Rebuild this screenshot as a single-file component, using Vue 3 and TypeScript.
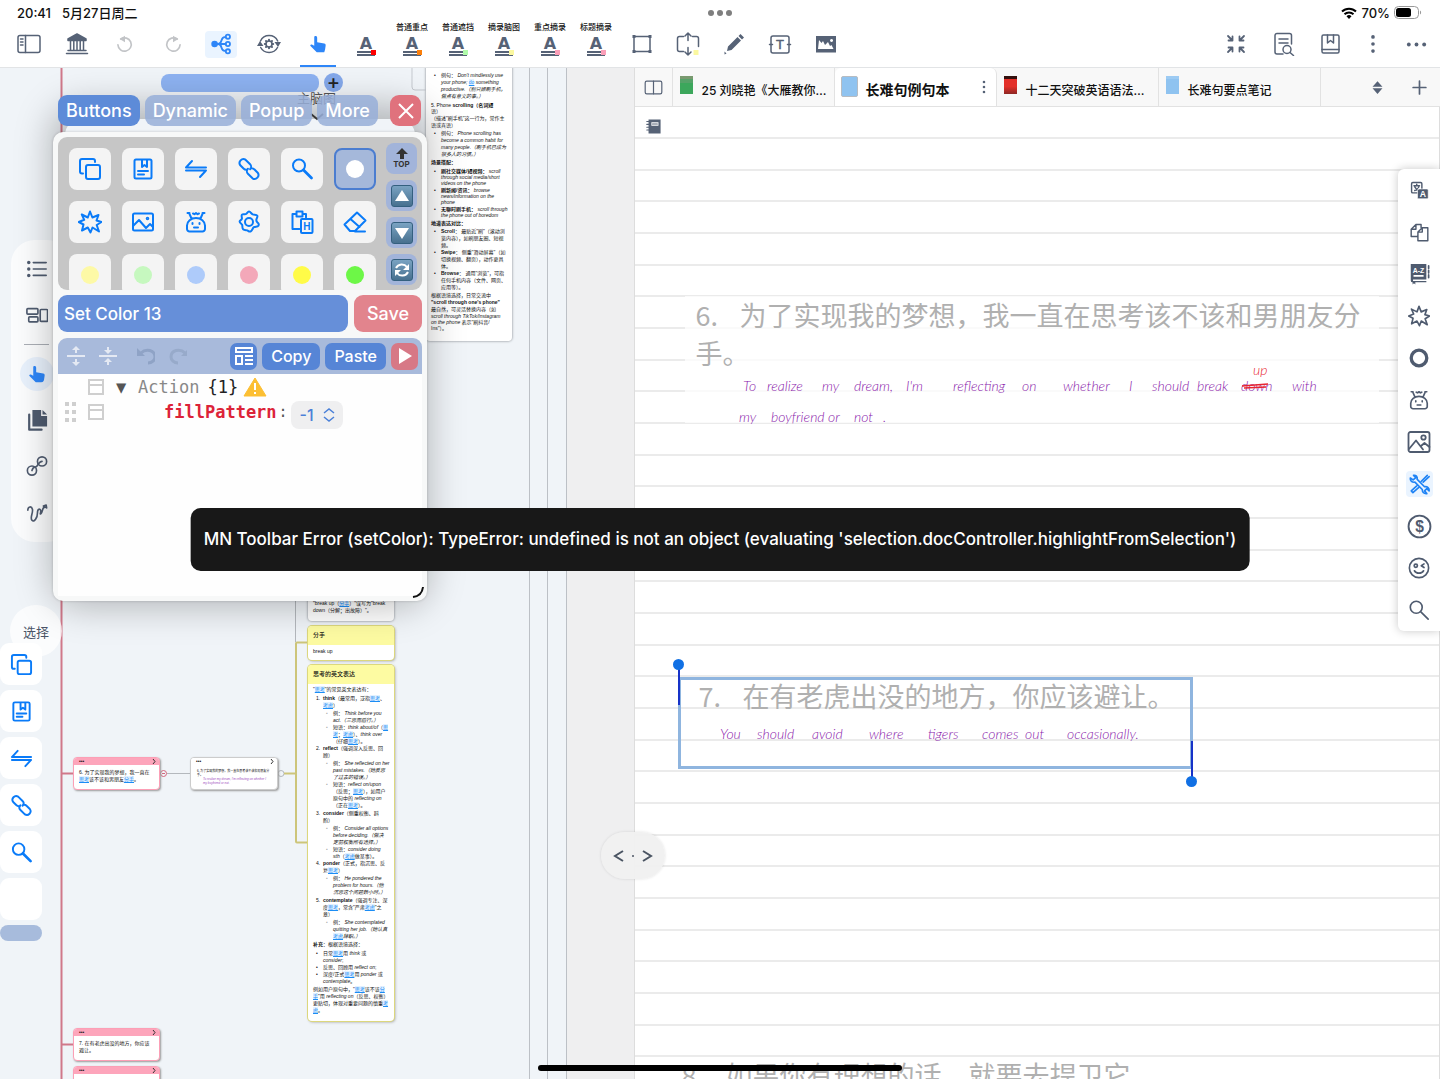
<script setup lang="ts">
import { ref } from 'vue'

interface Run { text: string; kind: string }
interface Block { indent: number; mark?: string; lh: number; gap?: number; text: string }
interface Word { x: number; y: number; text: string; red?: boolean }

const copySq = '<rect x="8" y="8" width="14" height="14" rx="2"/><path d="M5 16.500H4a2 2 0 0 1-2-2V4a2 2 0 0 1 2-2h11a2 2 0 0 1 2 2v1"/>'
const bookNote = '<rect x="3.500" y="2.500" width="17" height="19" rx="1.500"/><path d="M11 3v7l2.500-2 2.500 2V3M7 14h10M7 17.500h6"/>'
const swap = '<path d="M2 10.500h20M2 10.500L8 4M22 13.500H2M22 13.500L16 20"/>'
const chain = '<path d="M10.500 12.500c-1.500.5-3 0-4-1L3.300 8.300a3.900 3.900 0 0 1 5.200-5.600l4.600 4.600c1.400 1.400 1.300 3.600 0 5M13.500 11.500c1.500-.5 3 0 4 1l3.200 3.200a3.900 3.900 0 0 1-5.200 5.600l-4.600-4.600c-1.400-1.400-1.300-3.600 0-5"/>'
const glass = '<circle cx="9" cy="8.500" r="6"/><path d="M13.500 13l8 8" stroke-width="2.800"/>'
const burst = '<path d="M12 1.500l2.400 6L20.500 5l-2 5.500 5 1.500-4.800 3L21 21.500l-6.500-4L12.500 22.500l-2.700-5L4 20.500l1.500-6L.8 12l5.400-2.200L3.800 4.500 9.800 7.500z"/>'
const picture = '<rect x="1.500" y="2" width="21" height="20" rx="2"/><circle cx="16.500" cy="7.500" r="2.200"/><path d="M2 19l7-8.500 7 9M14 16l3.500-3 5 4"/>'
const robot = '<path d="M3 15.500a9 7.500 0 0 1 18 0V19a2.500 2.500 0 0 1-2.500 2.500h-13A2.500 2.500 0 0 1 3 19zM7.500 8.500L5.500 4M16.500 8.500l2-4.500M9 3.500l1.500.7L12 3l1.500 1.200 1.500-.7M10 17.500h4M8.500 13v1M15.500 13v1M3.500 3h2M18.500 3h2"/>'
const hand = '<path fill="currentColor" stroke="none" d="M9 2.500c1.200 0 2 .8 2 2V10l8.500 1.500c1.200.2 1.800 1 1.700 2.200l-.7 5-1 3.300H10.500L3 14.500c-.8-1 .3-2.300 1.600-1.800L7.500 14V4c0-1 .6-1.500 1.500-1.500z"/>'
const links = '<circle cx="6.500" cy="17" r="5"/><circle cx="17.500" cy="7" r="5"/><path d="M6.500 17c2-6.500 3.500-2 5.500-5s3-5 5.500-5"/>'

const icons: Record<string, string> = {
  sidebar: '<rect x="1" y="3.500" width="22" height="17" rx="2"/><path d="M8.500 3.500v17M3.500 7h2.500M3.500 10h2.500M3.500 13h2.500"/>',
  bank: '<path fill="currentColor" d="M12 2l9 5v1.500H3V7z"/><path d="M5.500 9v9M8.800 9v9M12 9v9M15.200 9v9M18.500 9v9M3 18.500h18M1.500 21.500h21"/>',
  undo: '<path d="M7 6a8 8 0 1 1-3.500 7"/><path fill="currentColor" d="M12 2v8L5.500 6z" stroke="none"/>',
  redo: '<path d="M17 6a8 8 0 1 0 3.500 7"/><path fill="currentColor" d="M12 2v8l6.500-4z" stroke="none"/>',
  map: '<circle cx="5" cy="12" r="3.600" fill="currentColor" stroke="none"/><path d="M5 12h12M17 4.500h-1c-5 0-2 7.500-7 7.500 5 0 2 7.500 7 7.500h1"/><circle cx="19.500" cy="4" r="2.300"/><circle cx="19.500" cy="12" r="2.300"/><circle cx="19.500" cy="20" r="2.300"/>',
  cycle: '<path d="M3.500 9A9.500 9.500 0 0 1 20.700 9M20.500 15.500A9.500 9.500 0 0 1 3.700 15.500"/><path fill="currentColor" stroke="none" d="M0 14l3-5 3.500 5zM17.500 10H24l-3 5z"/><circle cx="12" cy="12" r="3"/><path stroke-width="2" d="M12 7.800v.8M12 15.400v.8M7.800 12h.8M15.400 12h.8M9 9l.5.5M14.500 14.500l.5.5M9 15l.5-.5M14.500 9.500L15 9"/>',
  hand,
  crop: '<path d="M5 4.500h14M5 19.500h14M4 6v12M20 6v12"/><path fill="currentColor" d="M2.500 3h3v3h-3zM18.500 3h3v3h-3zM2.500 18h3v3h-3zM18.500 18h3v3h-3z" stroke="none"/>',
  expand: '<path d="M7.500 4.500H3.500a2 2 0 0 0-2 2v11a2 2 0 0 0 2 2h4M16.500 4.500h4a2 2 0 0 1 2 2v8M12 8.500V1M9 4l3-3 3 3M12 15.500V23M9 20l3 3 3-3"/><path d="M17.500 18h5v5h-5z" fill="#fbf8a0" stroke="none"/>',
  pen: '<path fill="currentColor" stroke="none" d="M6 14.500L15.500 5l3.500 3.500L9.500 18 5 19zM16.500 4l2-2L22 5.500l-2 2zM2.500 19.500l2 2-2 1z"/>',
  textbox: '<rect x="3" y="4" width="18" height="17" rx="2"/><path d="M1.500 12.500h3M19.500 12.500h3"/><text x="12" y="17" text-anchor="middle" font-family="Liberation Sans" font-size="13" fill="currentColor" stroke-width=".5">T</text>',
  photo: '<path fill="currentColor" stroke="none" fill-rule="evenodd" d="M2 4h20v16.500H2zM4 17h15.500l-2-4-1.500 1-2-4-3 3-2-4-1.500 2L5 8zM17.500 7a1.500 1.500 0 1 0 .1 0z"/>',
  shrink: '<path stroke-width="1.800" d="M4 4l4.500 4.500M4.500 8.500h4v-4M20 4l-4.500 4.500M19.500 8.500h-4v-4M4 20l4.500-4.500M4.500 15.500h4v4M20 20l-4.500-4.500M19.500 15.500h-4v4"/>',
  docfind: '<path d="M12 22H6a2 2 0 0 1-2-2V3.500a2 2 0 0 1 2-2h12.500a2 2 0 0 1 2 2V12M8 7h9M8 11h9"/><circle cx="16" cy="17.500" r="4"/><path d="M19 20.500l3.500 3"/>',
  bookmark: '<rect x="4" y="3" width="17" height="18" rx="1.500"/><path d="M4 17.500h17M9.500 3v8l3-2.500 3 2.500V3"/>',
  vdots: '<g fill="currentColor" stroke="none"><circle cx="12" cy="3.500" r="2.200"/><circle cx="12" cy="12" r="2.200"/><circle cx="12" cy="20.500" r="2.200"/></g>',
  hdots: '<g fill="currentColor" stroke="none"><circle cx="4" cy="12" r="2"/><circle cx="12" cy="12" r="2"/><circle cx="20" cy="12" r="2"/></g>',
  split: '<rect x="1.500" y="4" width="21" height="16" rx="2"/><path d="M12 4v16"/>',
  sort: '<path fill="currentColor" stroke="none" d="M12 3l7 8H5zM12 21l7-8H5z"/>',
  plus: '<path stroke-width="2.400" d="M12 3v18M3 12h18"/>',
  notebook: '<path fill="currentColor" stroke="none" fill-rule="evenodd" d="M5 2h17v20H5zM9 6v5h10V6z"/><path d="M10.500 8.500h7M2.500 5h4M2.500 9h4M2.500 13h4M2.500 17h4"/>',
  translate: '<rect x="2" y="2" width="13" height="13" rx="1.500"/><path d="M5 6h7M8.500 4v2M6 12c3-1 5-3 5.500-6M6 7.500c1 2 3 4 5.500 4.500"/><rect x="9.500" y="10" width="13.500" height="12.500" rx="1.500" fill="currentColor" stroke="#fff" stroke-width=".8"/><text x="16.200" y="20.500" text-anchor="middle" font-size="11" font-weight="700" font-family="Liberation Sans" fill="#fff" stroke="none">A</text>',
  pages: '<path d="M9 17H1.500V8L7.500 2H14v4M1.500 8h6V2M10 22.500V11.500L15.500 6H22.500v16.500zM10 11.500h5.500V6"/>',
  dict: '<path fill="currentColor" stroke="none" fill-rule="evenodd" d="M3 1h17v17H5.500v1.500H20V21H8v2.500L6.500 22 5 23.500V21a2 2 0 0 1-2-2zM6 13v2h11v-2z"/><path d="M22.500 3v3M22.500 8v3M22.500 13v3"/><text x="11.500" y="10.500" text-anchor="middle" font-size="7.500" font-weight="700" font-family="Liberation Sans" fill="#fff" stroke="none">A-Z</text>',
  burst, ring: '<circle cx="12" cy="12" r="8.500" stroke-width="3.600"/>', robot, picture,
  tools: '<path d="M2 5.500c-.5 3 2 5 5 4.500l8 8c0 3 2 5 5 4.500l-2.500-3 2.500-2.500 2.500 2.500c.500-3-2-5-5-4.500l-8-8c.5-3-1.500-5-4-4.500L8 5 5 7.500zM20.500 2.500L14 9M22.500 4L16 10M9 14l-6 5.500 1.800 2L11 16"/>',
  dollar: '<circle cx="12" cy="12" r="10.500"/><text x="12" y="17.500" text-anchor="middle" font-size="15" font-family="Liberation Sans" font-weight="700" fill="currentColor" stroke="none">$</text>',
  wink: '<circle cx="12" cy="12" r="10.500"/><circle cx="8.500" cy="9.500" r="1.800"/><path d="M17.500 7.500l-3 2 3 2M7 15c2 3.500 8 3.500 10 0"/>',
  find: '<circle cx="9" cy="9" r="6.500"/><path d="M14 14l8 8"/>',
  list: '<path d="M8 5h14M8 12h14M8 19h14"/><g fill="currentColor" stroke="none"><circle cx="3" cy="5" r="1.900"/><circle cx="3" cy="12" r="1.900"/><circle cx="3" cy="19" r="1.900"/></g>',
  blocks: '<rect x="1" y="5" width="12" height="6" rx="1"/><rect x="3" y="14" width="10" height="5.500" rx="1"/><rect x="15.500" y="6" width="8" height="13" rx="1"/>',
  copydark: '<path fill="currentColor" stroke="none" d="M7 1h9.500v6.500H23V19H7z"/><path fill="currentColor" stroke="none" d="M18 1l5 5h-5z"/><path stroke-width="2.400" d="M3.500 6v16.500H17"/>',
  links,
  squiggle: '<path d="M2 10c0-4 4-5 5-1s-3 9-.5 12 6-3 6-8 3-5 3.500-2.500-1.500 5 .5 3 1-8 5.500-6.500M19 5.500l3-1 .5 3"/>',
  copySq, bookNote, swap, chain, glass,
  image2: '<rect x="2" y="3.500" width="20" height="17" rx="1.500"/><path d="M2 16l6-6 7 8 4-4 3 3"/><circle cx="16.500" cy="8.500" r=".8"/>',
  gear: '<path d="M12 1.500c1.500 0 2.300 2.300 3.700 2.900s3.900-.1 4.600 1.200-1 2.900-1 4.400.3 1.600 1.500 2.700 1.400 1.700.6 3-3.200.7-4.500 1.500-1.800 3.800-3.300 4.300-2.400-.7-3.200-1.100-3.100 0-4.300-1.200-.4-3.200-1-4.400-2.600-2-2.500-3.300 2-1.500 2.300-2.700-.9-3.200.1-4.200 3 .1 4.100-.6 1.600-2.500 2.900-2.500z"/><circle cx="12" cy="12" r="4"/>',
  pasteH: '<path d="M9.500 19H2.500V4H6M13 4h3v3.500M6.500 1.500h6v5h-6z"/><rect x="11" y="9" width="11.500" height="14" rx="1"/><text x="16.800" y="19.700" text-anchor="middle" font-size="10" font-weight="700" font-family="Liberation Sans" fill="currentColor" stroke="none">H</text>',
  eraser: '<path d="M1.500 14.500L14 2.500l8.500 8L12 21H7zM7.500 9l9 8M12 21.500h10"/>',
}

const leftTools = ['sidebar', 'bank', 'undo', 'redo', 'map', 'cycle', 'hand']
const highlighters = [
  { label: '', color: '#fe0000' },
  { label: '普通重点', color: '#fb7f0b' },
  { label: '普通遮挡', color: '#b0fbaa' },
  { label: '摘录脑图', color: '#fbf8a0' },
  { label: '重点摘录', color: '#fb9fb8' },
  { label: '标题摘录', color: '#fb9fb8' },
]
const midTools = ['crop', 'expand', 'pen', 'textbox', 'photo']
const rightTools = ['shrink', 'docfind', 'bookmark', 'vdots', 'hdots']
const sideTools = ['translate', 'pages', 'dict', 'burst', 'ring', 'robot', 'picture', 'tools', 'dollar', 'wink', 'find']
const palette = ['hand', 'copydark', 'links', 'squiggle']
const floatTools = ['copySq', 'bookNote', 'swap', 'chain', 'glass', '']
const panelTools = ['copySq', 'bookNote', 'swap', 'chain', 'glass', '#ffffff', 'burst', 'image2', 'robot', 'gear', 'pasteH', 'eraser', '#fdf9a6', '#c6f8bf', '#aecbfa', '#f3a8b9', '#fffb48', '#6df747']
const tabs = [
  { title: '25 刘晓艳《大雁教你…', cover: 'green' },
  { title: '长难句例句本', cover: 'blue', active: true },
  { title: '十二天突破英语语法…', cover: 'red' },
  { title: '长难句要点笔记', cover: 'blue' },
]
const modes = ['Buttons', 'Dynamic', 'Popup', 'More']
const mode = ref('Buttons')
const actionName = ref('Set Color 13')
const pattern = ref('-1')

function runs(line: string): Run[] {
  return line.split(/(\*[^*]+\*|_[^_]+_|\[[^\]]+\])/).filter(Boolean).map((part) => {
    const kind = part[0] === '*' ? 'b' : part[0] === '_' ? 'i' : part[0] === '[' ? 'a' : ''
    return { text: kind ? part.slice(1, -1) : part, kind }
  })
}

const scrollNotes: Block[] = [
  { indent: 10, mark: '•', lh: 7, text: "例句： _Don't mindlessly use_|_your phone;_ [do] _something_|_productive.（别只顾刷手机，_|_做点有意义的事。）_" },
  { indent: 0, lh: 6, gap: 2, text: '5. Phone *scrolling（名词短*|语）' },
  { indent: 0, lh: 7, gap: 1, text: '（描述"刷手机"这一行为，常作主|语或宾语）' },
  { indent: 10, mark: '•', lh: 7, gap: 1, text: '例句： _Phone scrolling has_|_become a common habit for_|_many people.（刷手机已成为_|_很多人的习惯。）_' },
  { indent: 0, lh: 7, gap: 1, text: '*场景搭配：*' },
  { indent: 10, mark: '•', lh: 6, gap: 2, text: '*刷社交媒体/短视频：* _scroll_|_through social media/short_|_videos on the phone_' },
  { indent: 10, mark: '•', lh: 6, gap: 1, text: '*刷新闻/资讯：* _browse_|_news/information on the_|_phone_' },
  { indent: 10, mark: '•', lh: 6, gap: 1, text: '*无聊时刷手机：* _scroll through_|_the phone out of boredom_' },
  { indent: 0, lh: 7, gap: 2, text: '*地道表达对比：*' },
  { indent: 10, mark: '•', lh: 7, gap: 1, text: '*Scroll*： 最贴近"刷"（滚动浏|览内容），如刷朋友圈、短视|频。' },
  { indent: 10, mark: '•', lh: 7, text: '*Swipe*： 侧重"滑动屏幕"（如|切换视频、翻页），动作更具|体。' },
  { indent: 10, mark: '•', lh: 7, text: '*Browse*： 通用"浏览"，可指|任何手机内容（文件、网页、|应用等）。' },
  { indent: 0, lh: 7, gap: 1, text: '根据语境选择，日常交流中|*"scroll through one\'s phone"*|最自然，可灵活替换内容（如' },
  { indent: 0, lh: 6, text: '_scroll through TikTok/Instagram_|_on the phone_ 表示"刷抖音/|Ins"）。' },
]
const thinkNotes: Block[] = [
  { indent: 0, lh: 7, text: '"[思考]"的常见英文表达有：' },
  { indent: 10, mark: '1.', lh: 7, gap: 2, text: '*think*（最常用，泛指[思考]、|[考虑]）' },
  { indent: 20, mark: '◦', lh: 7, gap: 1, text: '例： _Think before you_|_act.（三思而后行。）_' },
  { indent: 20, mark: '◦', lh: 7, text: '短语：_think about/of_（[思]|[考]；[考虑]）、_think over_|（仔细[思考]）。' },
  { indent: 10, mark: '2.', lh: 7, text: '*reflect*（强调深入反思、回|顾）' },
  { indent: 20, mark: '◦', lh: 7, gap: 1, text: '例： _She reflected on her_|_past mistakes.（她反思_|_了过去的错误。）_' },
  { indent: 20, mark: '◦', lh: 7, text: '短语：_reflect on/upon_|（反思；[思考]），如用户|原句中的 _reflecting on_|（正在[思考]）。' },
  { indent: 10, mark: '3.', lh: 7, gap: 1, text: '*consider*（侧重权衡、斟|酌）' },
  { indent: 20, mark: '◦', lh: 7, gap: 1, text: '例： _Consider all options_|_before deciding.（做决_|_定前权衡所有选择。）_' },
  { indent: 20, mark: '◦', lh: 7, text: '短语：_consider doing_|_sth_（[考虑]做某事）。' },
  { indent: 10, mark: '4.', lh: 7, text: '*ponder*（正式，指沉思、反|复[思考]）' },
  { indent: 20, mark: '◦', lh: 7, gap: 1, text: '例： _He pondered the_|_problem for hours.（他_|_沉思这个问题数小时。）_' },
  { indent: 10, mark: '5.', lh: 7, gap: 1, text: '*contemplate*（强调专注、深|度[思考]，常含"严肃[考虑]"之|意）' },
  { indent: 20, mark: '◦', lh: 7, gap: 1, text: '例： _She contemplated_|_quitting her job.（她认真_|[考虑]_辞职。）_' },
  { indent: 0, lh: 7, gap: 1, text: '*补充*：根据语境选择：' },
  { indent: 10, mark: '•', lh: 7, gap: 2, text: '日常[思考]用 _think_ 或|_consider_;' },
  { indent: 10, mark: '•', lh: 7, text: '反思、回顾用 _reflect on_;' },
  { indent: 10, mark: '•', lh: 7, text: '深度/正式[思考]用 _ponder_ 或|_contemplate_。' },
  { indent: 0, lh: 7, gap: 1, text: '例如用户原句中，"[思考]该不该[分]|[手]"用 _reflecting on_（反思、权衡）|更贴切，体现对重要问题的慎重[考]|[虑]。' },
]
const ink6: Word[] = [
  { x: 58, y: 95, text: 'To' }, { x: 82, y: 95, text: 'realize' }, { x: 137, y: 95, text: 'my' }, { x: 169, y: 95, text: 'dream,' },
  { x: 221, y: 95, text: "I'm" }, { x: 268, y: 95, text: 'reflecting' }, { x: 337, y: 95, text: 'on' }, { x: 378, y: 95, text: 'whether' },
  { x: 444, y: 95, text: 'I' }, { x: 467, y: 95, text: 'should' }, { x: 512, y: 95, text: 'break' }, { x: 556, y: 95, text: 'down' },
  { x: 607, y: 95, text: 'with' }, { x: 568, y: 79, text: 'up', red: true },
  { x: 54, y: 126, text: 'my' }, { x: 86, y: 126, text: 'boyfriend' }, { x: 143, y: 126, text: 'or' }, { x: 169, y: 126, text: 'not' }, { x: 198, y: 126, text: '.' },
]
const ink7: Word[] = [
  { x: 42, y: 62, text: 'You' }, { x: 79, y: 62, text: 'should' }, { x: 134, y: 62, text: 'avoid' }, { x: 191, y: 62, text: 'where' },
  { x: 250, y: 62, text: 'tigers' }, { x: 304, y: 62, text: 'comes' }, { x: 347, y: 62, text: 'out' }, { x: 389, y: 62, text: 'occasionally.' },
]
const cards = [{ id: 'scroll', title: '', blocks: scrollNotes }, { id: 'think', title: '思考的英文表达', blocks: thinkNotes }]
</script>

<template>
  <div class="app">
    <header class="status">
      <span>20:41</span><span class="date">5月27日周二</span>
      <span class="grip"><i></i><i></i><i></i></span>
      <span class="power">
        <svg width="16" height="12" viewBox="0 0 16 12" fill="none" stroke="#000" stroke-width="2"><path d="M1 4.500a10 10 0 0 1 14 0M3.500 7.200a6.500 6.500 0 0 1 9 0" /><path d="M8 12L5.500 9.300a3.600 3.600 0 0 1 5 0z" fill="#000" stroke="none" /></svg>
        70%
        <svg width="28" height="13" viewBox="0 0 28 13"><rect x=".5" y=".5" width="24" height="12" rx="4" fill="none" stroke="#999" /><rect x="2" y="2" width="15" height="9" rx="2.500" /><path d="M26 4.500c1.500.5 1.500 3.500 0 4z" fill="#999" /></svg>
      </span>
    </header>

    <nav class="toolbar" aria-label="Main tools">
      <button v-for="name in leftTools" :key="name" class="tool" :class="name" :aria-label="name">
        <svg class="ico" viewBox="0 0 24 24" v-html="icons[name]"></svg>
      </button>
      <button v-for="(h, i) in highlighters" :key="i" class="tool mark" :aria-label="h.label || 'highlight'">
        <span v-if="h.label" class="tag">{{ h.label }}</span>
        <span class="letter">A</span><i class="swatch" :style="{ background: h.color }"></i>
      </button>
      <button v-for="name in midTools" :key="name" class="tool narrow" :class="name" :aria-label="name">
        <svg class="ico" viewBox="0 0 24 24" v-html="icons[name]"></svg>
      </button>
      <span class="grow"></span>
      <button v-for="name in rightTools" :key="name" class="tool end" :class="name" :aria-label="name">
        <svg class="ico" viewBox="0 0 24 24" v-html="icons[name]"></svg>
      </button>
    </nav>

    <main class="work">
      <section class="mindmap">
        <svg class="wires" width="634" height="1011" fill="none">
          <path d="M412 0v19q0 3 3 3h12" stroke="#c5c9cf" />
          <path d="M61.500 0v1011M62 705.500h11M62 976.500h11" stroke="#d0788a" stroke-width="2" />
          <circle cx="163.500" cy="705.500" r="3" stroke="#d4667c" /><path d="M162 705.500h3" stroke="#d4667c" />
          <path d="M167 705.500h23M295.500 520v54" stroke="#b4b8bd" /><circle cx="281" cy="705.500" r="3" stroke="#b4b8bd" />
          <path d="M284 705.500h12M307 574.500h-10q-1 0-1 1v198q0 1 1 1h10" stroke="#cdc57a" stroke-width="2" />
        </svg>
        <div class="gutter"><i></i><i></i><i></i></div>
        <div class="root-title">主脑图<svg width="14" height="8" fill="none" stroke="#444" stroke-width="2"><path d="M1 1l6 5 6-5" /></svg></div>
        <div class="progress"><i></i><b>+</b></div>

        <article v-for="c in cards" :key="c.id" class="card" :class="c.id">
          <h3 v-if="c.title">{{ c.title }}</h3>
          <div class="notes">
            <p v-for="(b, i) in c.blocks" :key="i" :style="{ paddingLeft: b.indent + 'px', lineHeight: b.lh + 'px', marginTop: (b.gap || 0) + 'px' }">
              <em v-if="b.mark" class="bullet">{{ b.mark }}</em>
              <span v-for="(line, j) in b.text.split('|')" :key="j" class="line"><template v-for="(r, k) in runs(line)" :key="k"><a v-if="r.kind === 'a'" href="#">{{ r.text }}</a><span v-else :class="r.kind">{{ r.text }}</span></template></span>
            </p>
          </div>
        </article>
        <article class="card error">
          <div class="notes"><p>"break up（<a href="#">分手</a>）"误写为"break<br>down（分解；出故障）"。</p></div>
        </article>
        <article class="card breakup"><h3>分手</h3><div class="notes"><p>break up</p></div></article>
        <article class="node six"><header><span>•••</span><svg width="4" height="5" fill="none" stroke="#333"><path d="M1 0l2 2.500L1 5" /></svg></header><p>6. 为了实现我的梦想，我一直在<br><a href="#">思考</a>该不该和男朋友<a href="#">分手</a>。</p></article>
        <article class="node clip"><header><span>•••</span><svg width="4" height="5" fill="none" stroke="#333"><path d="M1 0l2 2.500L1 5" /></svg></header><p>6. 为了实现我的梦想，我一直在思考该不该和男朋友分<br>手。</p><p class="scrawl">To realize my dream, I'm reflecting on whether I<br>my boyfriend or not.</p></article>
        <article class="node seven"><header><span>•••</span><svg width="4" height="5" fill="none" stroke="#333"><path d="M1 0l2 2.500L1 5" /></svg></header><p>7. 在有老虎出没的地方，你应该<br>避让。</p></article>
        <article class="node eight"><header><span>•••</span><svg width="4" height="5" fill="none" stroke="#333"><path d="M1 0l2 2.500L1 5" /></svg></header></article>
      </section>

      <section class="document">
        <nav class="tabs" aria-label="Documents">
          <button class="pane" aria-label="Split view"><svg class="ico" viewBox="0 0 24 24" v-html="icons.split"></svg></button>
          <button v-for="t in tabs" :key="t.title" class="tab" :class="{ active: t.active }">
            <i class="cover" :class="t.cover"></i><span>{{ t.title }}</span>
            <svg v-if="t.active" class="ico more" viewBox="0 0 24 24" v-html="icons.vdots"></svg>
          </button>
          <span class="grow"></span>
          <button class="pane" aria-label="Sort"><svg class="ico" viewBox="0 0 24 24" v-html="icons.sort"></svg></button>
          <button class="pane" aria-label="New tab"><svg class="ico" viewBox="0 0 24 24" v-html="icons.plus"></svg></button>
        </nav>
        <div class="paper">
          <button class="outline" aria-label="Outline"><svg class="ico" viewBox="0 0 24 24" v-html="icons.notebook"></svg></button>
          <div class="question q6">
            <p><span class="num">6.</span>为了实现我的梦想，我一直在思考该不该和男朋友分手。</p>
            <svg class="ink" width="700" height="140"><text v-for="(w, i) in ink6" :key="i" :x="w.x" :y="w.y" :class="{ red: w.red }">{{ w.text }}</text><path d="M557 90l26-2M559 92l22-1" stroke="#e8252f" stroke-width="1.500" /></svg>
          </div>
          <div class="question q7">
            <p><span class="num">7.</span>在有老虎出没的地方，你应该避让。</p>
            <svg class="ink" width="515" height="92"><text v-for="(w, i) in ink7" :key="i" :x="w.x" :y="w.y">{{ w.text }}</text></svg>
            <i class="handle start"></i><i class="handle stop"></i>
          </div>
          <div class="question q8"><p><span class="num">8.</span>如果你有理想的话，就要去捍卫它</p></div>
        </div>
      </section>
    </main>

    <aside class="side">
      <button v-for="name in sideTools" :key="name" :class="name" :aria-label="name"><svg class="ico" viewBox="0 0 24 24" v-html="icons[name]"></svg></button>
    </aside>

    <aside class="palette">
      <button aria-label="list"><svg class="ico" viewBox="0 0 24 24" v-html="icons.list"></svg></button>
      <button aria-label="blocks"><svg class="ico" viewBox="0 0 24 24" v-html="icons.blocks"></svg></button>
      <hr>
      <button v-for="name in palette" :key="name" :class="name" :aria-label="name"><svg class="ico" viewBox="0 0 24 24" v-html="icons[name]"></svg></button>
    </aside>
    <button class="choose">选择</button>
    <aside class="float">
      <button v-for="(name, i) in floatTools" :key="i" :aria-label="name || 'color'"><svg v-if="name" class="ico" viewBox="0 0 24 24" v-html="icons[name]"></svg></button>
      <i></i>
    </aside>
    <button class="pager" aria-label="Page width"><svg width="40" height="16" fill="none" stroke="#4b5563" stroke-width="2"><path d="M10 3L2 8l8 5M30 3l8 5-8 5" /><circle cx="20" cy="8" r="1" fill="#4b5563" stroke="none" /></svg></button>

    <section class="editor">
      <div class="modes">
        <button v-for="m in modes" :key="m" :class="{ on: mode === m }" @click="mode = m">{{ m }}</button>
        <span class="grow"></span>
        <button class="close" aria-label="Close"><svg width="18" height="18" fill="none" stroke="#fff" stroke-width="2"><path d="M2 2l14 14M16 2L2 16" /></svg></button>
      </div>
      <div class="panel">
        <div class="picker">
          <div class="keys">
            <button v-for="(name, i) in panelTools" :key="i" :class="{ chosen: i === 5 }" :aria-label="name">
              <i v-if="name[0] === '#'" :style="{ background: name }"></i>
              <svg v-else class="ico" viewBox="0 0 24 24" v-html="icons[name]"></svg>
            </button>
          </div>
          <div class="jump">
            <button class="top"><svg width="12" height="11" fill="#333"><path d="M6 0l6 6H8v5H4V6H0z" /></svg>TOP</button>
            <button aria-label="Up"><span><svg width="16" height="16" fill="#fff"><path d="M8 2l7 11H1z" /></svg></span></button>
            <button aria-label="Down"><span><svg width="16" height="16" fill="#fff"><path d="M8 14L1 3h14z" /></svg></span></button>
            <button aria-label="Refresh"><span><svg width="18" height="18" fill="none" stroke="#fff" stroke-width="2"><path d="M3 7a6.500 6.500 0 0 1 11-1M15 11a6.500 6.500 0 0 1-11 1" /><path d="M16 3v6h-6zM2 15V9h6z" fill="#fff" stroke="none" /></svg></span></button>
          </div>
        </div>
        <div class="naming"><input v-model="actionName" aria-label="Action name"><button>Save</button></div>
        <div class="bar">
          <button class="flat" aria-label="Expand"><svg width="18" height="20" fill="none" stroke="#e4e9f3" stroke-width="2"><path d="M0 10h18M9 3v4M9 13v4" /><path d="M9 0l4 4H5zM9 20l4-4H5z" fill="#e4e9f3" stroke="none" /></svg></button>
          <button class="flat" aria-label="Collapse"><svg width="18" height="20" fill="none" stroke="#e4e9f3" stroke-width="2"><path d="M0 10h18M9 1v4M9 15v4" /><path d="M9 8l4-4H5zM9 12l4 4H5z" fill="#e4e9f3" stroke="none" /></svg></button>
          <button class="flat" aria-label="Undo"><svg width="20" height="18" fill="none" stroke="#8fa3c6" stroke-width="3"><path d="M4 6c5-5 14-3 14 4 0 3-3 6-7 6" /><path d="M0 1v8h8z" fill="#8fa3c6" stroke="none" /></svg></button>
          <button class="flat" aria-label="Redo"><svg width="20" height="18" fill="none" stroke="#97aaca" stroke-width="3"><path d="M16 6C11 1 2 3 2 10c0 3 3 6 7 6" /><path d="M20 1v8h-8z" fill="#97aaca" stroke="none" /></svg></button>
          <span class="grow"></span>
          <button class="sq" aria-label="Template"><svg width="18" height="18" fill="none" stroke="#fff" stroke-width="2"><path d="M1 1h16v4H1zM1 9h6v8H1zM10 9h8M10 13h8M10 17h8" /></svg></button>
          <button>Copy</button><button>Paste</button>
          <button class="run" aria-label="Run"><svg width="14" height="16" fill="#fff"><path d="M1 0l13 8-13 8z" /></svg></button>
        </div>
        <div class="tree">
          <div class="row"><i class="dots none"></i><i class="frame"></i><span class="tri">▼</span><span class="key">Action</span><span>{1}</span>
            <svg class="warn" width="24" height="20"><path d="M12 1l11 18H1z" fill="#fcbf33" stroke="#fcbf33" stroke-linejoin="round" /><path d="M12 6v7M12 15v2" stroke="#fff" stroke-width="2" /></svg>
          </div>
          <div class="row">
            <svg class="dots" width="12" height="20" fill="#cfcfcf"><path d="M0 0h4v4H0zM7 0h4v4H7zM0 8h4v4H0zM7 8h4v4H7zM0 16h4v4H0zM7 16h4v4H7z" /></svg>
            <i class="frame"></i><label class="field" for="fill">fillPattern</label><span class="colon">:</span>
            <span class="choice"><select id="fill" v-model="pattern"><option>-1</option><option>0</option></select><svg width="12" height="14" fill="none" stroke="#4b80d8" stroke-width="1.500"><path d="M1 5l5-4 5 4M1 9l5 4 5-4" /></svg></span>
          </div>
        </div>
        <svg class="resize" width="12" height="12" fill="none" stroke="#111" stroke-width="2"><path d="M11 1q-1 9-10 10" /></svg>
      </div>
    </section>

    <div class="toast" role="alert">MN Toolbar Error (setColor): TypeError: undefined is not an object (evaluating 'selection.docController.highlightFromSelection')</div>
    <i class="home"></i>
  </div>
</template>

<style>
body { margin: 0; }
</style>

<style scoped>
.app { position: relative; display: flex; flex-direction: column; height: 100vh; overflow: hidden; background: #fff; color: #111; font-family: Inter, "Noto Sans CJK SC", sans-serif; }
.app * { box-sizing: border-box; }
button { border: 0; padding: 0; margin: 0; background: none; font: inherit; color: inherit; display: flex; align-items: center; justify-content: center; flex: none; }
p, h3 { margin: 0; }
.grow { flex: 1; }
.ico { width: 24px; height: 24px; fill: none; stroke: currentColor; stroke-width: 1.5; stroke-linejoin: round; stroke-linecap: round; flex: none; }

.status { display: flex; align-items: center; height: 25px; padding: 0 18px 0 17px; font-size: 13px; font-weight: 500; position: relative; flex: none; }
.date { margin-left: 11px; font-size: 13px; }
.grip { position: absolute; left: 50%; transform: translateX(-50%); display: flex; gap: 3px; }
.grip i { width: 6px; height: 6px; border-radius: 50%; background: #7f7f7f; }
.power { margin-left: auto; display: flex; align-items: center; gap: 4px; }

.toolbar { display: flex; height: 43px; padding-left: 5px; color: #566276; border-bottom: 1px solid #e2e4e6; flex: none; }
.tool { position: relative; width: 48px; height: 38px; }
.tool.narrow { width: 46px; }
.mark { width: 46px; flex-direction: column; }
.tool.end { width: 47px; }
.tool.end.vdots { width: 40px; }
.undo, .redo { color: #c2c4c7; }
.undo .ico, .redo .ico { width: 20px; height: 20px; stroke-width: 2; }
.tool.map { color: #2e86f8; }
.tool.map::before { content: ""; position: absolute; inset: 6px 8px 5px 8px; border-radius: 4px; background: #eaf4ff; }
.map .ico { position: relative; width: 22px; height: 22px; stroke-width: 2; }
.tool.hand { color: #2e86f8; width: 50px; }
.tool.hand::after { content: ""; position: absolute; left: 7px; right: 7px; top: 40px; height: 2px; background: #2e86f8; }
.hand .ico { width: 20px; height: 20px; }
.tool.hdots .ico { width: 23px; height: 23px; }
.tool.vdots .ico { width: 20px; height: 20px; }
.letter { width: 18px; height: 20px; border-bottom: 5px double #566276; font: 700 16px/16px "DejaVu Sans", sans-serif; text-align: center; margin-top: 3px; }
.swatch { position: absolute; left: 28px; top: 25px; width: 5px; height: 5px; }
.tag { position: absolute; top: -4px; font-size: 8px; line-height: 12px; font-weight: 500; white-space: nowrap; color: #111; }

.work { display: flex; flex: 1; min-height: 0; }
.mindmap { position: relative; width: 44%; background: #f0f4f8; overflow: hidden; flex: none; }
.wires { position: absolute; left: 0; top: 0; }
.gutter { position: absolute; left: 529px; right: 0; top: 0; bottom: 0; display: flex; background: #f0f4f8; }
.gutter i { width: 18px; border-left: 1px solid #bcc0c6; }
.gutter i:last-child { flex: 1; margin-left: 1px; background: #efeff0; }
.root-title { position: absolute; left: 297px; top: 22px; font-size: 13px; line-height: 17px; color: #555; display: flex; flex-direction: column; align-items: center; gap: 6px; }
.progress { position: absolute; left: 161px; top: 5px; display: flex; align-items: center; gap: 5px; }
.progress i { width: 158px; height: 18px; border-radius: 8px; background: #8db2f1; }
.progress b { width: 19px; height: 19px; border-radius: 50%; background: #84a8ea; font: 500 20px/18px Inter, sans-serif; text-align: center; color: #222; }

.card { position: absolute; border-radius: 4px; background: #fff; box-shadow: 0 0 2px 1px #b9bdc2; overflow: hidden; font: 5px/7px "Liberation Sans", "Noto Sans CJK SC", sans-serif; }
.card h3 { height: 19px; background: #fdfba2; font-size: 6px; line-height: 19px; font-weight: 500; padding: 0 5px; }
.notes { padding: 3px 5px; white-space: nowrap; }
.notes p { position: relative; }
.line { display: block; }
.bullet { position: absolute; margin-left: -7px; font-style: normal; }
.b { font-weight: 700; }
.i { font-style: italic; }
.card a, .node a { color: #1b8df5; background: #e2f1ff; }
.scroll { left: 426px; top: -6px; width: 86px; height: 279px; padding-top: 7px; }
.think { left: 308px; top: 597px; width: 86px; height: 356px; box-shadow: 0 0 0 1px #dcd77d, 1px 1px 3px #999; }
.think .notes { padding-top: 2px; }
.error { left: 308px; top: 520px; width: 86px; height: 33px; padding-top: 9px; }
.breakup { left: 308px; top: 558px; width: 86px; height: 34px; box-shadow: 0 0 0 1px #dcd77d, 1px 1px 3px #999; }
.node { position: absolute; left: 73px; width: 87px; height: 33px; border: 1px solid #fc9fb6; border-radius: 4px; background: #fff; box-shadow: 1px 1px 2px #9a9a9a; font: 5px/7px "Liberation Sans", "Noto Sans CJK SC", sans-serif; white-space: nowrap; overflow: hidden; }
.node header { display: flex; justify-content: space-between; align-items: center; height: 7px; padding: 0 3px 0 5px; background: #fda5bb; line-height: 7px; }
.node p { padding: 4px 5px; }
.six { top: 689px; }
.seven { top: 960px; }
.eight { top: 998px; }
.clip { left: 190px; top: 689px; width: 88px; border-color: #ccc; font-size: 3px; line-height: 4px; }
.clip header { background: #fff; font-size: 5px; }
.clip p { padding: 4px 6px 0; }
.clip .scrawl { padding: 0 12px; color: #a04cc0; font-style: italic; }

.document { flex: 1; min-width: 0; display: flex; flex-direction: column; border-left: 1px solid #ddd; }
.tabs { display: flex; height: 39px; background: #f8f8f8; border-bottom: 1px solid #e2e2e2; color: #566276; flex: none; }
.pane { width: 42px; }
.pane:first-child { width: 38px; border-right: 1px solid #e2e2e2; }
.pane .ico { width: 17px; height: 17px; }
.pane:first-child .ico { width: 19px; height: 19px; }
.tab { width: 162px; border-right: 1px solid #e2e2e2; justify-content: flex-start; padding: 4px 0 0 7px; font-size: 12px; color: #111; font-weight: 500; gap: 9px; white-space: nowrap; }
.tab.active { background: #fff; border-radius: 6px 6px 0 0; font-size: 14px; font-weight: 700; padding-left: 6px; gap: 8px; }
.cover { width: 13px; height: 18px; margin-top: -8px; background: #8fc3f0; border-top: 3px solid #9dcbf3; flex: none; }
.active .cover { width: 17px; height: 21px; border: 1px solid #b7bcc2; border-radius: 2px; margin-top: -6px; }
.cover.green { background: linear-gradient(#56a269 30%, #3ca75c 30%); border-top-color: #7a9a70; }
.cover.red { background: linear-gradient(#e33029 50%, #8d2724); border-top-color: #33100e; }
.more { width: 14px; height: 14px; margin: -4px 5px 0 auto; color: #566276; }
.paper { position: relative; flex: 1; min-height: 0; overflow: hidden; padding-top: 189px; background: repeating-linear-gradient(to bottom, #fff 0 30px, #ebebeb 30px 32px, #fff 32px 62px, #ebebeb 62px 64px, #fff 64px 93px, #ebebeb 93px 95px); border-right: 1px solid #ddd; }
.outline { position: absolute; left: 10px; top: 11px; color: #566276; }
.outline .ico { width: 17px; height: 17px; }
.question { position: relative; font: 400 27px/38px "Noto Sans CJK SC", sans-serif; color: #b0b0b0; }
.question .num { display: inline-block; width: 44px; }
.q6 { margin: 0 60px 0 50px; height: 127px; padding: 0 0 0 11px; background: rgba(255, 255, 255, .75); }
.q7 { margin: 254px 0 0 43px; width: 515px; height: 92px; padding-left: 21px; box-shadow: inset 0 0 0 3px #8fb5df; }
.q8 { margin: 287px 0 0 47px; }
.ink { position: absolute; left: 0; top: 0; overflow: visible; font: italic 300 14px Lato, sans-serif; fill: #8a22ab; }
.ink .red { fill: #e8252f; }
.handle { position: absolute; width: 2px; height: 28px; background: #1632c8; }
.handle::after { content: ""; position: absolute; left: -5px; width: 11px; height: 11px; border-radius: 50%; background: #1170e4; }
.start { left: 0; top: 0; }
.start::after { top: -18px; }
.start::before, .stop::before { content: ""; position: absolute; left: 0; width: 2px; height: 8px; background: #1632c8; }
.start::before { top: -8px; }
.stop { right: 0; bottom: 0; }
.stop::before { bottom: -8px; }
.stop::after { bottom: -18px; }

.side { position: absolute; right: 0; top: 169px; width: 42px; background: #fff; border-radius: 6px 0 0 6px; box-shadow: 0 0 10px rgba(0, 0, 0, .22); color: #4f5b6f; }
.side button { width: 42px; height: 42px; }
.side .ico { width: 22px; height: 22px; stroke-width: 1.8; }
.side .translate .ico, .side .pages .ico { width: 19px; height: 19px; }
.side .picture .ico { width: 24px; height: 24px; }
.side .tools { color: #1f83f5; }
.side .tools .ico { width: 27px; height: 26px; padding: 2px; background: #eaf4ff; border-radius: 4px; }
.side .dollar .ico { width: 25px; height: 25px; }
.palette { position: absolute; left: 11px; top: 240px; width: 60px; height: 302px; border-radius: 24px; background: rgba(255, 255, 255, .75); color: #4f5b6f; padding: 6px 0 0 2px; display: flex; flex-direction: column; }
.palette button { width: 47px; height: 46px; }
.palette .ico { width: 22px; height: 22px; stroke-width: 1.8; }
.palette hr { width: 25px; margin: 6px 0 6px 11px; border: 0; border-top: 1px solid #aaaeb5; }
.palette .hand { color: #2e86f8; }
.palette .hand .ico { width: 34px; height: 34px; padding: 7px; border-radius: 50%; background: #e8f1fc; }
.choose { position: absolute; left: 10px; top: 605px; width: 52px; height: 52px; border-radius: 50%; background: rgba(255, 255, 255, .75); font-size: 13px; color: #4b5568; }
.float { position: absolute; left: 0; top: 643px; width: 42px; display: flex; flex-direction: column; gap: 5px; color: #0a7bf8; }
.float button { width: 42px; height: 42px; border-radius: 9px; background: #fff; }
.float .ico { width: 23px; height: 23px; stroke-width: 2; }
.float i { height: 16px; border-radius: 8px; background: #a7bbdc; }
.pager { position: absolute; left: 601px; top: 832px; width: 64px; height: 47px; border-radius: 24px; background: rgba(240, 240, 240, .95); box-shadow: 0 0 3px rgba(0, 0, 0, .12); }

.editor { position: absolute; left: 53px; top: 95px; width: 374px; font-weight: 500; }
.editor::before { content: ""; position: absolute; inset: 24px 12px 8px; border-radius: 16px; box-shadow: 0 0 36px 14px rgba(0, 0, 0, .26); }
.modes { position: relative; display: flex; gap: 5px; height: 37px; padding: 0 6px 6px 5px; font-size: 18px; color: #fff; }
.modes button { height: 31px; padding: 0 8px; border-radius: 9px; background: rgba(151, 175, 217, .86); }
.modes button.on { background: #5d8bd8; }
.modes button.close { width: 31px; padding: 0; background: #e0727d; }
.panel { position: relative; height: 469px; padding: 5px; border-radius: 10px; background: #f7f8f8; box-shadow: 0 0 3px rgba(0, 0, 0, .2); display: flex; flex-direction: column; }
.picker { display: flex; justify-content: space-between; height: 153px; padding: 6px 5px 0 11px; border-radius: 9px; background: #c6c6c6; overflow: hidden; flex: none; }
.keys { display: grid; grid-template-columns: repeat(6, 42px); grid-auto-rows: 42px; column-gap: 11px; row-gap: 11px; padding-top: 5px; color: #0a7bf8; }
.keys button { border-radius: 8px; background: #f4f4f4; }
.keys .ico { width: 24px; height: 24px; stroke-width: 2; }
.keys i { width: 18px; height: 18px; border-radius: 50%; }
.keys .chosen { background: #a5b8da; border: 2px solid #4b7dd0; }
.jump { display: flex; flex-direction: column; gap: 6px; }
.jump button { width: 31px; height: 31px; border-radius: 8px; background: #a2b4da; }
.jump .top { flex-direction: column; font-size: 8px; line-height: 9px; font-weight: 700; color: #333; gap: 1px; }
.jump span { display: flex; align-items: center; justify-content: center; width: 22px; height: 22px; border-radius: 3px; background: linear-gradient(#7aa3c2, #47708f); border: 1px solid #34607f; }
.naming { display: flex; gap: 6px; margin-top: 5px; color: #fff; }
.naming input { flex: 1; min-width: 0; height: 37px; border: 0; border-radius: 9px; padding: 0 6px; background: #668fd9; color: #fff; font: 500 17px Inter, sans-serif; }
.naming button { width: 68px; border-radius: 9px; background: #e2848d; font-size: 18px; }
.bar { display: flex; align-items: center; gap: 5px; height: 36px; margin-top: 6px; padding: 0 4px 0 9px; border-radius: 9px 9px 0 0; background: #a8badb; color: #fff; flex: none; }
.bar button { height: 27px; padding: 0 9px; border-radius: 7px; background: #5685d6; font-size: 16px; }
.bar .flat { background: none; padding: 0; width: 18px; margin-right: 9px; }
.bar .flat:nth-child(2) { margin-right: 15px; }
.bar .sq, .bar .run { width: 27px; padding: 0; }
.bar .run { background: #d77886; }
.tree { flex: 1; background: #fefefe; font: 17px/24px "DejaVu Sans Mono", monospace; color: #222; }
.row { display: flex; align-items: center; height: 25px; padding-left: 7px; }
.dots { width: 12px; }
.frame { width: 16px; height: 16px; margin-left: 11px; border: 2px solid #cfcfcf; background: linear-gradient(#fff 3px, #cfcfcf 3px 5px, #fff 5px); }
.tri { width: 20px; margin: 0 7px 0 7px; font-size: 17px; text-align: center; color: #555; }
.key { color: #888; margin-right: 8px; }
.warn { margin-left: 5px; }
.field { margin-left: 60px; color: #dc2338; font-weight: 700; }
.colon { color: #555; width: 12px; margin-left: 2px; font-size: 15px; }
.choice { position: relative; display: flex; align-items: center; width: 52px; height: 28px; margin-top: 7px; border-radius: 8px; background: #efeff0; }
.choice select { appearance: none; width: 52px; height: 28px; border: 0; background: none; padding: 0 0 0 9px; color: #4b80d8; font: 500 16px Inter, sans-serif; }
.choice svg { position: absolute; right: 8px; }
.resize { position: absolute; right: 3px; bottom: 3px; }

.toast { position: absolute; left: 50%; top: 508px; transform: translateX(-50%); padding: 0 13px; height: 63px; border-radius: 10px; background: #181818; color: #fff; font-size: 17px; line-height: 63px; font-weight: 500; white-space: nowrap; }
.home { position: absolute; left: 50%; bottom: 8px; width: 364px; height: 6px; border-radius: 3px; transform: translateX(-50%); background: #000; }
</style>
